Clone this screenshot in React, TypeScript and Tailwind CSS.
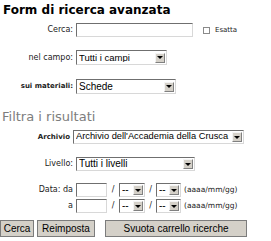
import React from 'react';

const label = "font-['DejaVu_Sans',sans-serif] text-[8px] text-[#222]";
const ctlFont = "font-['Liberation_Sans',Arial,sans-serif] text-black";

const Field: React.FC<{ w: string }> = ({ w }) => (
  <div className={`${w} h-[14px] bg-white border border-t-[#6f6f6f] border-l-[#6f6f6f] border-r-[#d8d8d8] border-b-[#d8d8d8]`} />
);

const Select: React.FC<{ w: string; text: string; h?: string; size?: string }> = ({
  w,
  text,
  h = 'h-[15px]',
  size = 'text-[10px]',
}) => (
  <div className={`${w} ${h} ${ctlFont} ${size} flex items-center bg-white border border-t-[#6f6f6f] border-l-[#6f6f6f] border-r-[#d8d8d8] border-b-[#d8d8d8] pl-[2px] pr-[1px]`}>
    <span className="flex-1 whitespace-nowrap overflow-hidden leading-none">{text}</span>
    <span className="w-[10px] h-[10px] shrink-0 bg-[#d4d0c8] border border-t-[#f4f4f4] border-l-[#f4f4f4] border-r-[#808080] border-b-[#808080] flex items-center justify-center">
      <span className="w-0 h-0 border-l-[3px] border-r-[3px] border-t-[3px] border-l-transparent border-r-transparent border-t-black" />
    </span>
  </div>
);

const Row: React.FC<{ text: string; lw?: string; bold?: boolean; className?: string; children: React.ReactNode }> = ({
  text,
  lw = 'w-[76px]',
  bold,
  className = '',
  children,
}) => (
  <div className={`flex items-center ${className}`}>
    <span
      className={`${lw} text-right pr-[3px] font-['DejaVu_Sans',sans-serif] text-[#222] ${
        bold ? 'font-bold text-[7px]' : 'text-[8px]'
      }`}
    >
      {text}
    </span>
    {children}
  </div>
);

const DateRow: React.FC<{ text: string; className?: string }> = ({ text, className = '' }) => (
  <Row text={text} className={className}>
    <Field w="w-[31px]" />
    <span className={`${label} w-[12px] text-center`}>/</span>
    <Select w="w-[26px]" h="h-[14px]" text="--" />
    <span className={`${label} w-[11px] text-center`}>/</span>
    <Select w="w-[25px]" h="h-[14px]" text="--" />
    <span className="font-['DejaVu_Sans',sans-serif] text-[7.5px] text-[#222] ml-[3px]">(aaaa/mm/gg)</span>
  </Row>
);

const Btn: React.FC<{ w: string; children: React.ReactNode }> = ({ w, children }) => (
  <button className={`${w} h-[17px] ${ctlFont} text-[10px] bg-[#d4d0c8] border border-[#7c7c7c] leading-none`}>
    {children}
  </button>
);

export default function App() {
  return (
    <div className="w-[271px] h-[241px] bg-white overflow-hidden flex flex-col">
      <h1 className="mt-[2px] ml-[3px] h-[16px] font-['DejaVu_Sans',sans-serif] font-bold text-[12px] leading-[16px] text-black">
        Form di ricerca avanzata
      </h1>

      <Row text="Cerca:" className="mt-[5px]">
        <Field w="w-[117px]" />
        <span className="ml-[10px] w-[7px] h-[7px] border border-[#8a8a8a] bg-white" />
        <span className="font-['DejaVu_Sans',sans-serif] text-[7px] text-[#222] ml-[5px]">Esatta</span>
      </Row>

      <Row text="nel campo:" className="mt-[13px]">
        <Select w="w-[91px]" text="Tutti i campi" size="text-[9.5px]" />
      </Row>

      <Row text="sui materiali:" bold className="mt-[14px]">
        <Select w="w-[100px]" text="Schede" />
      </Row>

      <div className="mt-[16px] ml-[2px] h-[14px] font-['DejaVu_Sans',sans-serif] text-[13px] leading-[14px] text-[#7d7d7d]">
        Filtra i risultati
      </div>

      <Row text="Archivio" lw="w-[73px]" bold className="mt-[6px]">
        <Select w="w-[171px]" h="h-[14px]" text="Archivio dell'Accademia della Crusca" size="text-[9.3px]" />
      </Row>

      <Row text="Livello:" className="mt-[13px]">
        <Select w="w-[119px]" h="h-[14px]" text="Tutti i livelli" />
      </Row>

      <DateRow text="Data: da" className="mt-[12px]" />
      <DateRow text="a" className="mt-[2px]" />

      <div className="mt-[7px] flex">
        <Btn w="w-[34px]">Cerca</Btn>
        <Btn w="w-[58px] ml-[3px]">Reimposta</Btn>
        <Btn w="w-[142px] ml-[10px]">Svuota carrello ricerche</Btn>
      </div>
    </div>
  );
}
